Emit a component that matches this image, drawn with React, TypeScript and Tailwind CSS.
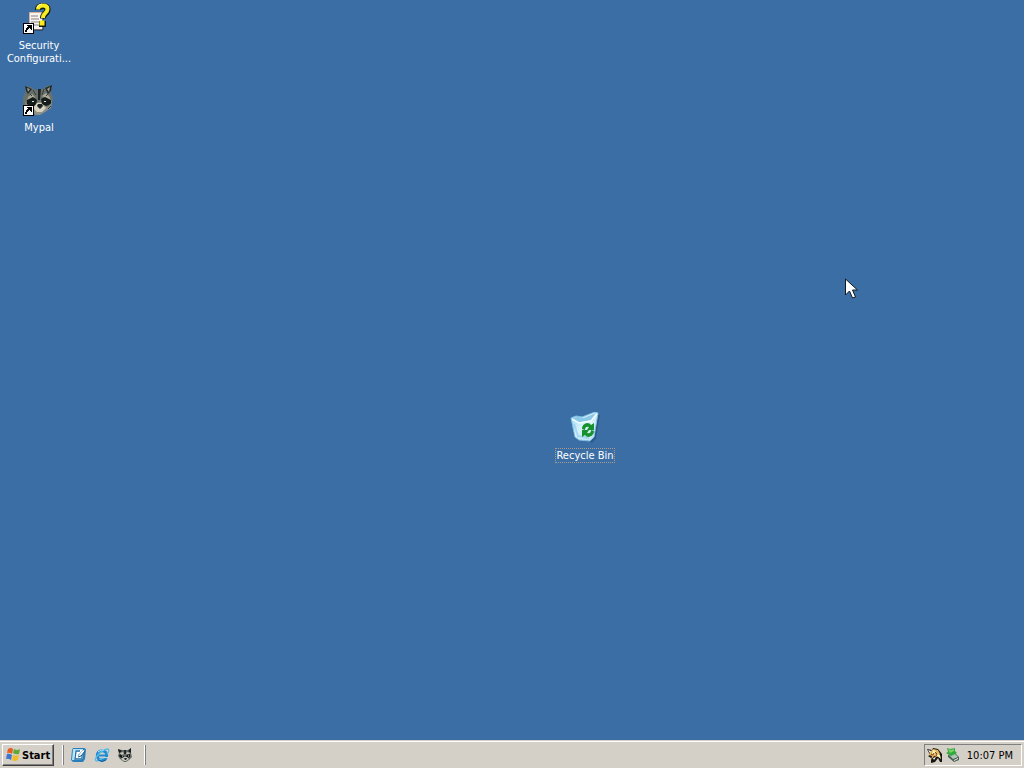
import type { ReactNode } from "react";

function ShortcutArrow() {
  return (
    <g shapeRendering="crispEdges">
      <path d="M0 21h11v11H0z" fill="#000" />
      <path d="M1 22h9v9H1z" fill="#fff" />
      <path d="M4 23h5v5H8v-1H7v-1H6v1H5v1H4v2H2v-2h1v-2h1v-1h1v-1H4z" fill="#000" />
    </g>
  );
}

function SecurityIcon() {
  return (
    <svg width="32" height="32" viewBox="0 0 32 32" aria-hidden="true">
      <path d="M6.500 10.500h13v17h-13z" fill="#f6f2f0" stroke="#d8b09a" />
      <path d="M20 13v15H9" fill="none" stroke="#1f2d40" />
      <path d="M8 14h7M8 17h8M8 20h8M8 23h8" stroke="#8d8084" />
      <path d="M15 8q0-4 5-4 4.500 0 4.500 3.500 0 2.500-2.500 4.500-2 1.500-2 4.500" fill="none" stroke="#111a16" strokeWidth="6" />
      <path d="M15 7.500q0-4 5-4 4.500 0 4.500 3.500 0 2.500-2.500 4.500-2 1.500-2 4.500" fill="none" stroke="#f7ee20" strokeWidth="4" />
      <path d="M16 19h7v6h-7z" fill="#111a16" />
      <path d="M16.500 18.500h5v5h-5z" fill="#f7ee20" />
      <path d="M14 6q1-4 5-4" fill="none" stroke="#ffffa2" />
      <ShortcutArrow />
    </svg>
  );
}

function RaccoonFace() {
  return (
    <g>
      <path d="M3 2l5 1 4 3 8-1 4-3 5-1-1 7 2 6-1 6-4 5-5 3-4 2-5-1-6-3-5-5V14l2-5z" fill="#697069" />
      <path d="M2 2l7 3-4 5-2-3zM29 1l-7 3 3 6 3-3z" fill="#1d2b2f" />
      <path d="M4 4l3 1-2 3zM27 3l-3 2 2 3z" fill="#a69780" />
      <path d="M5 13l4-3 3 3-2 2-6 3zM19 12l4-3 3 3 3 6-5-3z" fill="#aaa995" />
      <path d="M4 16l6-3 4 3-1 5-5 2-4-3zM18 15l4-2 6 3v4l-5 2-4-2z" fill="#151d1c" />
      <path d="M2 17l2 4 4 2 4-1 3-4h3l2 3 5 2 4-5-1 6-6 4-5 3h-4l-6-4-4-4z" fill="#8f9186" />
      <path d="M10 24l4-5h4l5 5-4 4h-5z" fill="#d6d2c2" />
      <path d="M15 5h3l-1 11h-2zM14 22l1-2h4l1 2-3 3z" fill="#1e2422" />
      <path d="M9 17h2v1H9zM21 17h2v1h-2z" fill="#eee5d4" />
      <path d="M10 6l3 5M21 5l-2 6M7 10l2 2M25 10l-2 2M4 22l4 3M28 22l-3 3" stroke="#353c39" />
    </g>
  );
}

function RaccoonIcon() {
  return (
    <svg width="32" height="32" viewBox="0 0 32 32" aria-hidden="true">
      <RaccoonFace />
      <ShortcutArrow />
    </svg>
  );
}

function RaccoonSmallIcon() {
  return (
    <svg width="16" height="16" viewBox="0 0 16 16" aria-hidden="true">
      <path d="M1 2l4 1h6l3-2v5l1 4-3 3-3 2H7l-4-3-2-3 1-3z" fill="#666c66" />
      <path d="M1 2l4 2-3 2zM14 1l-3 3 3 2zM3 7l3 1 1 2-3 1-2-2zM10 8l3-1v3l-2 1-2-1z" fill="#14191a" />
      <path d="M3 6l3-1 1 2-3 1zM9 7l1-2 3 1-1 1zM4 12l3-2h3l2 2-3 2H7z" fill="#c6c6ba" />
      <path d="M7 3h2v4H7zM7 11h3l-1 2H8z" fill="#22282a" />
      <path d="M5 9h1M11 9h1" stroke="#dfdfd4" />
    </svg>
  );
}

function RecycleIcon() {
  return (
    <svg width="32" height="32" viewBox="0 0 32 32" aria-hidden="true">
      <defs>
        <linearGradient id="bin" x1="0" y1="0" x2="1" y2="1">
          <stop offset="0" stopColor="#94d7f3" />
          <stop offset=".45" stopColor="#d8f2fb" />
          <stop offset="1" stopColor="#b2daf2" />
        </linearGradient>
      </defs>
      <path d="M27 5l4-3-4 25-4 4-3-2z" fill="#244d77" opacity=".6" />
      <path d="M2 6l5-2 6 1L26 0l3 1-4 24-4 4-11-1-4-3z" fill="url(#bin)" stroke="#80bfe3" strokeLinejoin="round" />
      <path d="M3 6l6-1 6 1L27 1l-5 7-12 3z" fill="#8bc8e8" />
      <path d="M3 7l7 4 12-2 6-7" fill="none" stroke="#f0fcff" strokeWidth="1.500" />
      <path d="M5 12l4 12 11 2" fill="none" stroke="#77c3ec" strokeWidth="2" opacity=".5" />
      <path d="M23 10l-2 16" stroke="#fff" opacity=".8" />
      <path d="M13 17q0-5 5-6 3 0 4 2l3-2v7h-7l2-3q-4-1-4 3z" fill="#16912b" />
      <path d="M25 19q0 4-5 6-3 0-4-2l-3 2v-7h7l-2 3q4 1 4-3z" fill="#16912b" />
    </svg>
  );
}

function WindowsIcon() {
  return (
    <svg width="16" height="16" viewBox="0 0 16 16" aria-hidden="true">
      <path d="M3 2q3-2 5 0L7 7Q5 5 2 6z" fill="#e95c22" />
      <path d="M9 2q3 2 6 0l-1 5q-3 1-6-1z" fill="#61a936" />
      <path d="M2 7q2-1 5 1l-1 5q-3-2-5-1z" fill="#3f74cd" />
      <path d="M8 8q3 1 6 0l-1 5q-3 2-6 0z" fill="#f0bd28" />
    </svg>
  );
}

function ShowDesktopIcon() {
  return (
    <svg width="16" height="16" viewBox="0 0 16 16" aria-hidden="true">
      <path d="M2 1h11l2 1-1 10-2 3H2l-2-2 1-10z" fill="#287fb9" />
      <path d="M2 2h10l-1 11H1z" fill="#b8e2f3" />
      <path d="M4 3h7l1 9-7 1-2-3z" fill="#fff" />
      <path d="M9 4H5L4 12h7V8H8l5-5" fill="none" stroke="#1c70aa" strokeWidth="1.300" />
      <path d="M8 8l4-5 2 1-4 5-3 1z" fill="#fff" />
      <path d="M14 4l-4 5-3 1" fill="none" stroke="#13568c" />
    </svg>
  );
}

function ExplorerIcon() {
  return (
    <svg width="16" height="16" viewBox="0 0 16 16" aria-hidden="true">
      <circle cx="8" cy="8.500" r="4.700" fill="none" stroke="#238bd0" strokeWidth="3" />
      <path d="M5 8.500h9" stroke="#238bd0" strokeWidth="2" />
      <path d="M10 10h5v1h-5z" fill="#c3dce5" />
      <path d="M2 14Q0 12 4 8q5-6 10-6 2 2-1 5M2 14q3 0 7-3" fill="none" stroke="#55bde9" strokeWidth="1.300" />
      <path d="M4 5q3-3 6-2" fill="none" stroke="#afe8fb" />
      <path d="M4 13q4 3 8 0" fill="none" stroke="#155fa3" />
    </svg>
  );
}

function VmIcon() {
  return (
    <svg width="16" height="16" viewBox="0 0 16 16" aria-hidden="true">
      <path d="M0 2l5 1 1-2 5 1 4 5v8h-2l-2-4-3 4-4 1v-5l-3-2 2-1z" fill="#17150f" />
      <path d="M3 5l3-3 5 1 2 4-3 3-3-1-3 4 1-4-3-1z" fill="#e8b35b" />
      <path d="M6 3l3 1-2 4-2-1zM9 6l4 2 1 4-4-3z" fill="#fff1bb" />
      <path d="M1 3l3 1-1 2zM6 11l3-1-2 3z" fill="#fff" />
      <path d="M4 7l2 1 1-2M8 5l2 2-1 2" fill="none" stroke="#70481d" />
    </svg>
  );
}

function SafelyRemoveIcon() {
  return (
    <svg width="16" height="16" viewBox="0 0 16 16" aria-hidden="true">
      <path d="M3 8l7-2 4 4v3l-5 2-6-5z" fill="#4a5f57" />
      <path d="M4 8l6-1 3 3-5 2z" fill="#aec7b7" />
      <path d="M9 13l4-2v1l-4 2z" fill="#f0eee1" />
      <path d="M2 1l3 1 5-1v3l2 2-6 3-5-3 2-1z" fill="#32a93c" />
      <path d="M3 2l3 1 3-1v2L5 6z" fill="#7bd265" />
    </svg>
  );
}

function DesktopItem({ icon, label, place, focused = false }: { icon: ReactNode; label: string; place: string; focused?: boolean }) {
  return (
    <button className={`absolute flex w-[76px] flex-col items-center gap-1 text-[11px] leading-[13px] text-white ${place}`}>
      {icon}
      <span className={`block border border-dotted text-center ${focused ? "border-[#a99c8c]" : "border-transparent"}`}>{label}</span>
    </button>
  );
}

function Divider() {
  return <span aria-hidden="true" className="h-5 w-[2px] border-l border-r border-l-white border-r-[#808080]" />;
}

export default function App() {
  return (
    <div className="flex min-h-screen cursor-default flex-col bg-[#3b6ea5] font-['DejaVu_Sans_Condensed','DejaVu_Sans',sans-serif] text-[11px] leading-[13px]">
      <main className="relative flex-1 overflow-hidden">
        <DesktopItem icon={<SecurityIcon />} label="Security Configurati..." place="left-px top-[2px]" />
        <DesktopItem icon={<RaccoonIcon />} label="Mypal" place="left-px top-[84px]" />
        <DesktopItem icon={<RecycleIcon />} label="Recycle Bin" place="left-[547px] top-[412px]" focused />
        <svg className="pointer-events-none absolute left-[845px] top-[278px]" width="13" height="21" viewBox="0 0 13 21" aria-hidden="true">
          <path d="M.5 1v16l4-4 3 7 3-1-3-7h5z" fill="#fff" stroke="#101820" />
        </svg>
      </main>
      <footer className="flex h-7 items-center border-t border-[#d4d0c8] bg-[#d4d0c8] px-[2px] shadow-[inset_0_1px_0_#ffffff]">
        <button className="mt-px flex h-[22px] items-center gap-px border border-b-[#404040] border-l-white border-r-[#404040] border-t-white pl-[2px] pr-[3px] font-bold shadow-[inset_-1px_-1px_0_#808080]">
          <WindowsIcon />
          <span>Start</span>
        </button>
        <nav aria-label="Quick launch" className="ml-2 mt-px flex items-center gap-[7px]">
          <Divider />
          <button aria-label="Show desktop"><ShowDesktopIcon /></button>
          <button aria-label="Internet Explorer"><ExplorerIcon /></button>
          <button aria-label="Mypal"><RaccoonSmallIcon /></button>
          <span className="ml-1 flex"><Divider /></span>
        </nav>
        <div className="ml-auto mt-px flex h-[22px] items-center gap-[2px] border border-b-white border-l-[#808080] border-r-white border-t-[#808080] pl-[2px] pr-2">
          <button aria-label="Virtual machine tools"><VmIcon /></button>
          <button aria-label="Safely remove hardware"><SafelyRemoveIcon /></button>
          <time className="ml-1">10:07 PM</time>
        </div>
      </footer>
    </div>
  );
}
